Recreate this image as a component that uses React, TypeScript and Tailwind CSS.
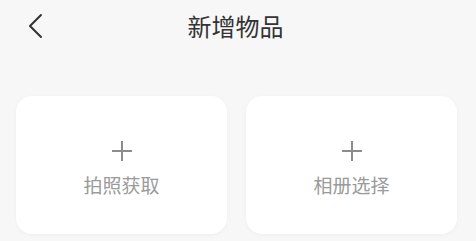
import React from "react";

function Card({ label }: { label: string }) {
  return (
    <div className="h-[138px] w-[211px] rounded-[16px] bg-white shadow-[0_1px_4px_rgba(0,0,0,0.04)] flex flex-col items-center justify-center pt-[8px]">
      <svg width="22" height="22" viewBox="0 0 22 22" className="block">
        <path d="M11 1v20M1 11h20" stroke="#8c8c8c" strokeWidth="2" fill="none" />
      </svg>
      <div className="mt-[10px] text-[19px] leading-[26px] text-[#9a9a9a]">{label}</div>
    </div>
  );
}

export default function App() {
  return (
    <div
      className="w-[476px] h-[241px] bg-[#f7f7f7] overflow-hidden"
      style={{ fontFamily: '"Noto Sans CJK SC", "Noto Sans", sans-serif' }}
    >
      <div className="h-[52px] grid grid-cols-[1fr_auto_1fr] items-center">
        <div className="pl-[28px] flex items-center">
          <svg width="16" height="26" viewBox="0 0 16 26" className="block">
            <path d="M13 2L2 13l11 11" stroke="#333333" strokeWidth="2" fill="none" strokeLinecap="round" strokeLinejoin="round" />
          </svg>
        </div>
        <div className="text-[24px] leading-[32px] text-[#333333] pr-[5px]">新增物品</div>
        <div />
      </div>
      <div className="flex gap-[19px] pl-[16px] pt-[44px]">
        <Card label="拍照获取" />
        <Card label="相册选择" />
      </div>
    </div>
  );
}
